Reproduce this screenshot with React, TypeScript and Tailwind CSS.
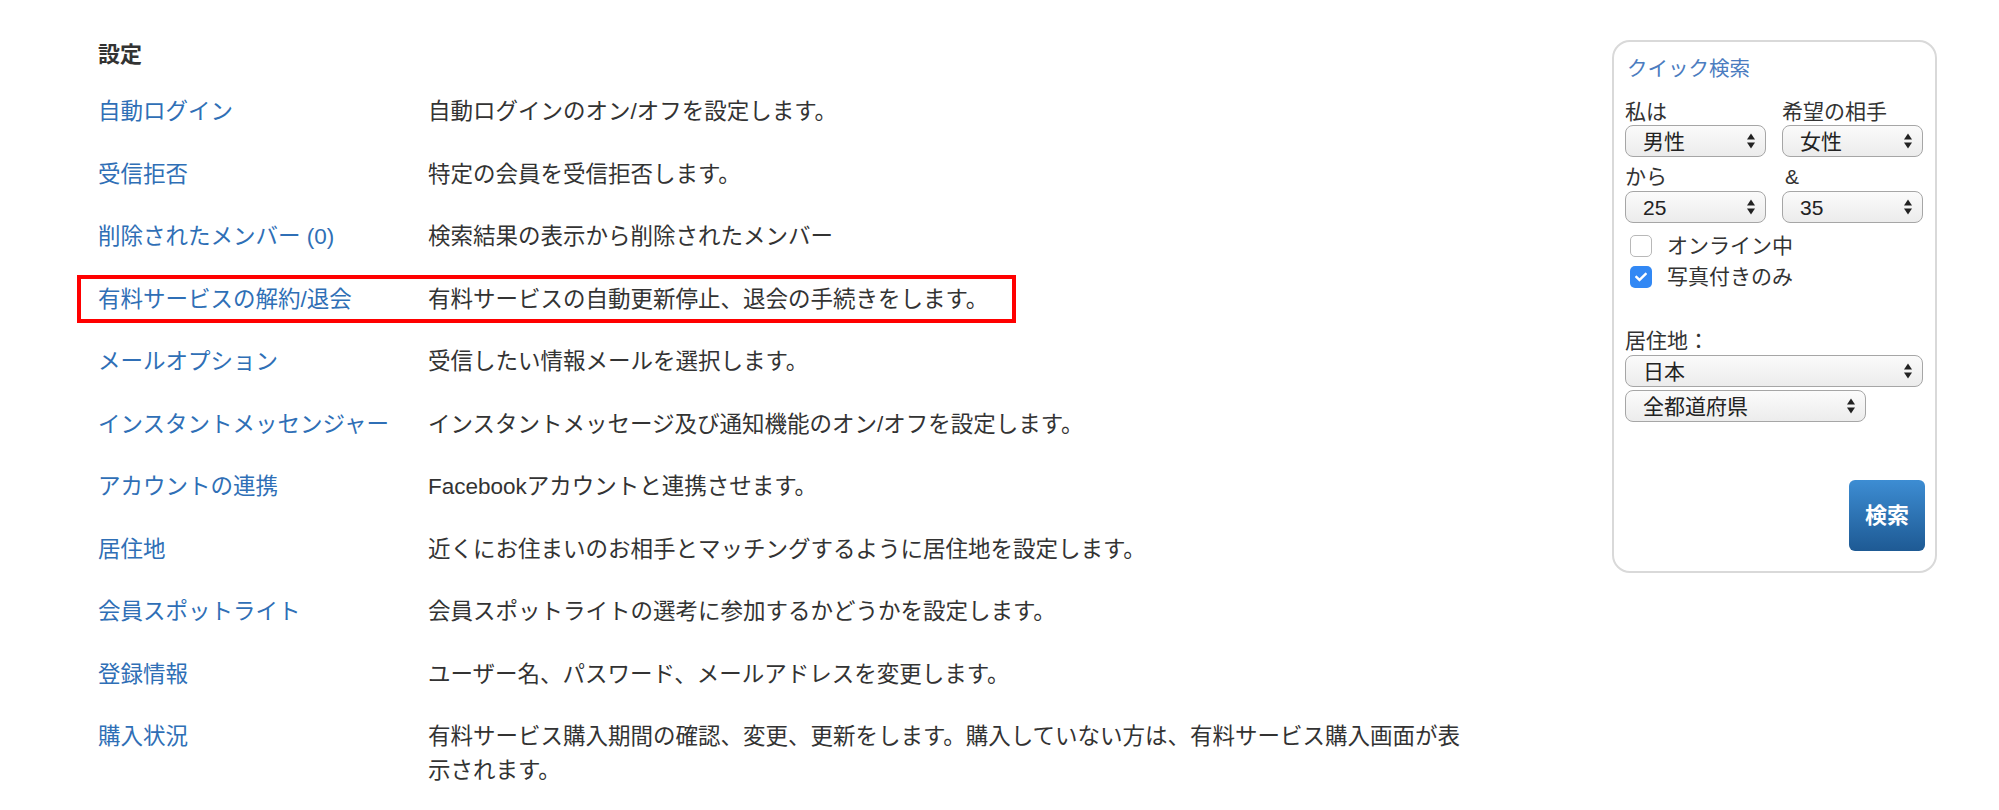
import { FaCheck } from 'react-icons/fa'

const rows: [string, string][] = [
  ['自動ログイン', '自動ログインのオン/オフを設定します。'],
  ['受信拒否', '特定の会員を受信拒否します。'],
  ['削除されたメンバー (0)', '検索結果の表示から削除されたメンバー'],
  ['有料サービスの解約/退会', '有料サービスの自動更新停止、退会の手続きをします。'],
  ['メールオプション', '受信したい情報メールを選択します。'],
  ['インスタントメッセンジャー', 'インスタントメッセージ及び通知機能のオン/オフを設定します。'],
  ['アカウントの連携', 'Facebookアカウントと連携させます。'],
  ['居住地', '近くにお住まいのお相手とマッチングするように居住地を設定します。'],
  ['会員スポットライト', '会員スポットライトの選考に参加するかどうかを設定します。'],
  ['登録情報', 'ユーザー名、パスワード、メールアドレスを変更します。'],
  [
    '購入状況',
    '有料サービス購入期間の確認、変更、更新をします。購入していない方は、有料サービス購入画面が表示されます。',
  ],
]

function Arrows() {
  return (
    <svg width="8" height="16" viewBox="0 0 8 16" className="shrink-0">
      <path d="M0 6.5 L4 0.5 L8 6.5 Z" fill="#222" />
      <path d="M0 9.5 L8 9.5 L4 15.5 Z" fill="#222" />
    </svg>
  )
}

function FakeSelect({ value, className }: { value: string; className: string }) {
  return (
    <div
      className={`flex h-[32px] items-center justify-between rounded-[8px] border border-[#a6a6a6] bg-gradient-to-b from-[#fbfbfb] to-[#ececec] pl-[17px] pr-[10px] text-[21px] leading-none text-[#222] ${className}`}
    >
      <span>{value}</span>
      <Arrows />
    </div>
  )
}

function Check({ checked, label }: { checked?: boolean; label: string }) {
  return (
    <div className="flex h-[31px] items-center pl-[5px]">
      {checked ? (
        <span className="flex h-[22px] w-[22px] items-center justify-center rounded-[5px] bg-[#3288f4] text-white">
          <FaCheck size={12} />
        </span>
      ) : (
        <span className="h-[22px] w-[22px] rounded-[5px] border border-[#b8b8b8] bg-white" />
      )}
      <span className="ml-[15px] text-[21px] text-[#333]">{label}</span>
    </div>
  )
}

export default function App() {
  return (
    <div className="flex w-[1999px] bg-white font-['Liberation_Sans','Noto_Sans_CJK_JP',sans-serif]">
      <div className="ml-[98px] w-[1375px] pt-[40px]">
        <h2 className="mb-[11px] h-[30px] text-[22px] font-bold leading-[30px] text-[#333]">設定</h2>
        {rows.map(([label, desc], i) => (
          <div key={label} className="relative flex py-[14.25px] text-[22.5px] leading-[34px]">
            {i === 3 && (
              <div className="pointer-events-none absolute left-[-21px] top-[6px] h-[48px] w-[939px] border-[4px] border-[#ff0000]" />
            )}
            <a className="w-[330px] shrink-0 text-[#2f6fb6]">{label}</a>
            <p className="w-[1045px] text-[#333]">{desc}</p>
          </div>
        ))}
      </div>

      <aside className="ml-[139px] mt-[40px] h-[533px] w-[325px] rounded-[18px] border-2 border-[#d9d9d9] pl-[11px] pr-[10px] pt-[13.5px]">
        <h3 className="h-[26px] pl-[2px] text-[20.5px] leading-[26px] text-[#4b7cc0]">クイック検索</h3>
        <div className="mt-[18.5px] grid grid-cols-[141px_141px] gap-x-[16px] text-[21px] leading-[24px] text-[#333]">
          <span>私は</span>
          <span>希望の相手</span>
          <FakeSelect value="男性" className="mt-[1px]" />
          <FakeSelect value="女性" className="mt-[1px]" />
          <span className="mt-[8px]">から</span>
          <span className="mt-[8px] pl-[3px]">&amp;</span>
          <FakeSelect value="25" className="mt-[2px]" />
          <FakeSelect value="35" className="mt-[2px]" />
        </div>
        <div className="mt-[7.5px]">
          <Check label="オンライン中" />
          <Check checked label="写真付きのみ" />
        </div>
        <div className="mt-[36.5px] text-[21px] leading-[24px] text-[#333]">居住地：</div>
        <FakeSelect value="日本" className="mt-[2px] w-[298px]" />
        <FakeSelect value="全都道府県" className="mt-[3px] w-[241px]" />
        <div className="mt-[58px] flex justify-end">
          <button className="flex h-[71px] w-[76px] items-center justify-center rounded-[6px] bg-gradient-to-b from-[#3d8dd3] to-[#1e5a94] text-[22px] font-bold text-white">
            検索
          </button>
        </div>
      </aside>
    </div>
  )
}
